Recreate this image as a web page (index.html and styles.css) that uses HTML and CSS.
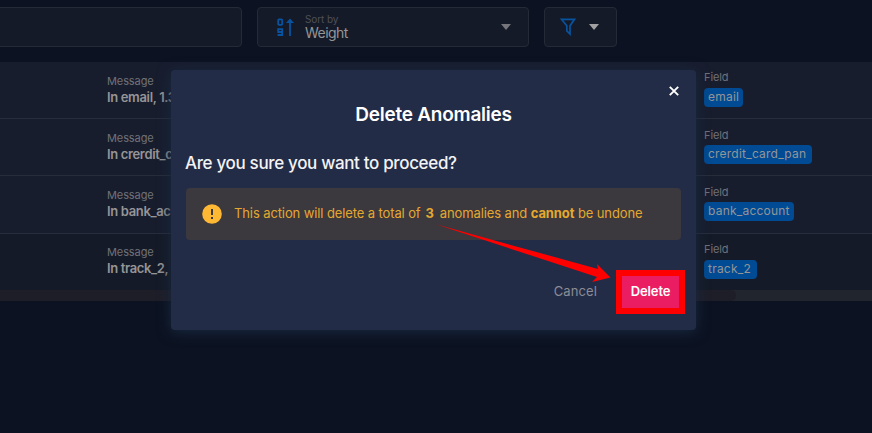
FILE: index.html
```html
<!DOCTYPE html>
<html lang="en">
<head>
<meta charset="utf-8">
<title>Delete Anomalies</title>
<link rel="stylesheet" href="styles.css">
</head>
<body>
<div class="toolbar">
  <div class="box search"></div>
  <div class="box sort">
    <svg class="sort-icon" width="18" height="19" viewBox="0 0 18 19" fill="none" stroke="#0853a0" stroke-width="1.8"><rect x="1.2" y="1.4" width="4" height="5.4" rx=".8"/><path d="M5.200 14H1.2v-2.900h4V17H.6M13 18V3"/><path d="M9 5l4-4.600L17 5z" fill="#0853a0" stroke="none"/></svg>
    <div class="sort-text"><span class="sort-label">Sort by</span><span class="sort-value">Weight</span></div>
    <span class="caret"></span>
  </div>
  <div class="box filter">
    <svg width="16" height="18" viewBox="0 0 16 18" fill="none" stroke="#0853a0" stroke-width="1.7"><path d="M1.500 1.300h13L10 7.800v8.200l-3.200-3.200v-5z"/></svg>
    <span class="caret light"></span>
  </div>
</div>
<div class="table">
  <div class="row"><div class="message"><span class="label">Message</span><b>In email, 1.3</b></div><div class="field"><span class="label flabel">Field</span><span class="chip c1">email</span></div></div>
  <div class="row lower"><div class="message"><span class="label">Message</span><b>In crerdit_card</b></div><div class="field"><span class="label flabel">Field</span><span class="chip c2">crerdit_card_pan</span></div></div>
  <div class="row third lower"><div class="message"><span class="label">Message</span><b>In bank_account</b></div><div class="field"><span class="label flabel">Field</span><span class="chip c3">bank_account</span></div></div>
  <div class="row last"><div class="message"><span class="label">Message</span><b>In track_2,</b></div><div class="field"><span class="label flabel">Field</span><span class="chip c4">track_2</span></div></div>
</div>
<div class="scroll"><div class="thumb"></div></div>
<div class="modal">
  <svg class="close" width="10" height="10" viewBox="0 0 10 10" stroke="#fff" stroke-width="1.9"><path d="M.8.8l8.4 8.4M9.2.8L.8 9.2"/></svg>
  <h1><span>Delete Anomalies</span></h1>
  <h2><span>Are you sure you want to proceed?</span></h2>
  <div class="warning">
    <svg width="20" height="20" viewBox="0 0 20 20"><circle cx="10" cy="10" r="9.8" fill="#ffb833"/><path d="M10 5v6M10 13v2" stroke="#3b383d" stroke-width="2"/></svg>
    <p><span class="w1">This action will delete a total of</span><b class="count">3</b><span class="w2">anomalies and <b>cannot</b> be undone</span></p>
  </div>
  <div class="actions"><span class="cancel">Cancel</span><span class="delete"><span>Delete</span></span></div>
</div>
<svg class="arrow" width="180" height="64" viewBox="0 0 180 64"><path d="M0 0L163 45l-1-5 13.500 13.500L157 58l5-5z" fill="#f00"/></svg>
</body>
</html>
```
FILE: styles.css
```css
* { box-sizing: border-box; }
body { margin: 0; width: 872px; height: 433px; overflow: hidden; position: relative; background: #0c1221; font-family: Inter, sans-serif; color: #959597; white-space: nowrap; }
.toolbar { height: 62px; display: flex; padding-top: 7px; }
.box { height: 40px; border: 1px solid #252a37; border-radius: 4px; background: #151a28; display: flex; align-items: center; flex: none; }
.search { width: 252px; margin-left: -10px; margin-right: 15px; }
.sort { width: 272px; margin-right: 15px; padding: 0 17px 0 19px; }
.sort-icon { margin-right: 10px; }
.sort-text { display: flex; flex-direction: column; flex: 1; padding-bottom: 1px; }
.sort-label { font-size: 10px; line-height: 11px; color: #4e5057; letter-spacing: -.1px; }
.sort-value { font-size: 14px; line-height: 15px; letter-spacing: -.55px; }
.caret { border: 5px solid transparent; border-top: 6px solid #75767b; border-bottom: 0; }
.caret.light { border-top-color: #a1a1a1; }
.filter { width: 73px; padding-left: 15px; gap: 13px; }
.row { height: 57px; border-bottom: 1px solid #282d3b; background: #181d2e; display: flex; padding-left: 107px; }
.row.third { height: 58px; }
.row.last { height: 56px; border: 0; background: #151a28; }
.message { width: 597px; padding-top: 12px; display: flex; flex-direction: column; }
.last .message { padding-top: 11px; }
.label { font-size: 11px; line-height: 14px; color: #707278; letter-spacing: -.1px; }
.message b { font-size: 13px; line-height: 18px; font-weight: 600; letter-spacing: -.35px; }
.field { padding-top: 8px; display: flex; flex-direction: column; align-items: flex-start; }
.lower .field { padding-top: 9px; }
.lower .flabel { margin-bottom: 3px; }
.flabel { line-height: 14px; margin-bottom: 4px; }
.chip { height: 19px; line-height: 18px; border-radius: 4px; background: #004b94; padding-left: 4px; font-size: 12px; letter-spacing: .22px; }
.c1 { width: 39px; } .c2 { width: 108px; } .c3 { width: 90px; } .c4 { width: 53px; }
.scroll { height: 11px; background: #20252e; }
.thumb { width: 736px; height: 11px; border-radius: 0 6px 6px 0; background: #1e1e29; }
.modal { position: absolute; left: 171px; top: 70px; width: 525px; height: 260px; border-radius: 4px; background: #232c47; box-shadow: 0 2px 14px #182a40; padding: 32px 15px 0; }
.close { position: absolute; right: 17px; top: 16px; }
h1 { margin: 0; font-size: 19px; line-height: 26px; font-weight: 600; letter-spacing: -.25px; text-align: center; color: #fff; }
h2 { margin: 22px 0 0 -1px; font-size: 17px; line-height: 26px; font-weight: 500; letter-spacing: -.34px; color: #f3f3f5; }
.warning { height: 52px; margin-top: 12px; background: #3b383e; border-radius: 4px; display: flex; align-items: center; padding-left: 16px; gap: 12px; color: #e5a82f; font-size: 13px; }
.warning p { margin: 0 0 2px; display: flex; letter-spacing: -.11px; }
.count { margin: 0 6px 0 5px; }
.w1, .w2 { white-space: pre; }
.actions { display: flex; justify-content: flex-end; margin: 30px -4px 0 0; align-items: center; font-size: 13px; }
.cancel { margin: 0 19px 2px 0; color: #8a8d96; letter-spacing: .1px; }
.delete { width: 69px; height: 44px; border: 6px solid #f00; background: #ea1d63; color: #fff; font-weight: 600; line-height: 31px; text-align: center; letter-spacing: -.1px; }
.arrow { position: absolute; left: 435px; top: 224px; }
```
